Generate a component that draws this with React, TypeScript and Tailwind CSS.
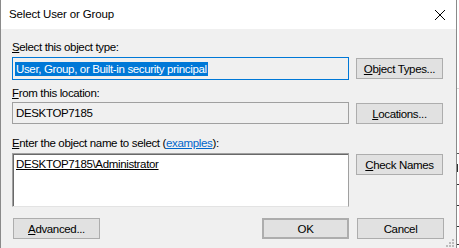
import React from 'react';

const font = { fontFamily: '"Liberation Sans", Arial, sans-serif' };

function Btn({ children, className = '' }: { children: React.ReactNode; className?: string }) {
  return (
    <div
      className={`flex h-[21px] w-[87px] shrink-0 items-center justify-center border border-[#adadad] bg-[#e1e1e1] text-black ${className}`}
    >
      {children}
    </div>
  );
}

export default function App() {
  return (
    <div
      className="flex h-[248px] w-[459px] overflow-hidden bg-white text-[11.5px] leading-[16px] tracking-[-0.35px] text-black"
      style={font}
    >
      {/* dialog window */}
      <div className="relative flex h-full w-[457px] shrink-0 flex-col border-x border-[#8a8a8a] bg-[#f0f0f0]">
        <div className="flex h-[29px] shrink-0 items-center justify-between bg-white pl-[8px] pr-[8px]">
          <span className="mt-[-1px] tracking-[-0.15px]">Select User or Group</span>
          <svg width="12" height="12" viewBox="0 0 12 12" className="mr-[2px]">
            <path d="M1 1L11 11M11 1L1 11" stroke="#000" strokeWidth="1" fill="none" />
          </svg>
        </div>

        <div className="flex flex-col pl-[11px] pr-[12px] pt-[10px]">
          <div className="h-[16px]">
            <span className="underline">S</span>elect this object type:
          </div>
          <div className="mt-[2px] flex items-start gap-[7px]">
            <div className="flex h-[23px] w-[337px] items-center border border-[#0078d7] bg-[#f0f0f0] pl-[2px]">
              <span className="bg-[#0078d7] px-[1px] leading-[14px] text-white">User, Group, or Built-in security principal</span>
            </div>
            <Btn className="mt-[1px]">
              <span><span className="underline">O</span>bject Types...</span>
            </Btn>
          </div>

          <div className="mt-[5px] h-[16px]">
            <span className="underline">F</span>rom this location:
          </div>
          <div className="mt-[1px] flex items-start gap-[7px]">
            <div className="flex h-[22px] w-[337px] items-center border border-[#a0a0a0] bg-[#f0f0f0] pl-[3px]">
              DESKTOP7185
            </div>
            <Btn className="mt-[1px]">
              <span><span className="underline">L</span>ocations...</span>
            </Btn>
          </div>

          <div className="mt-[11px] h-[16px]">
            <span className="underline">E</span>nter the object name to select (
            <span className="text-[#0066cc] underline">examples</span>):
          </div>
          <div className="mt-[2px] flex items-start gap-[7px]">
            <div className="h-[54px] w-[337px] border border-[#a0a0a0] border-b-[#e3e3e3] bg-white pl-[3px] pt-[2px] shadow-[inset_1px_1px_0_#696969]">
              <span className="underline">DESKTOP7185\Administrator</span>
            </div>
            <Btn className="mt-[1px]">
              <span><span className="underline">C</span>heck Names</span>
            </Btn>
          </div>

          <div className="mt-[11px] flex items-center">
            <Btn className="ml-[1px]">
              <span><span className="underline">A</span>dvanced...</span>
            </Btn>
            <div className="flex-1" />
            <Btn className="w-[73px] border-2 border-[#0078d7]">OK</Btn>
            <Btn className="ml-[8px] w-[72px]">Cancel</Btn>
          </div>
        </div>

        {/* size grip */}
        <svg width="8" height="8" viewBox="0 0 8 8" className="absolute bottom-[1px] right-[2px]">
          <rect x="6" y="0" width="2" height="2" fill="#bcbcbc" />
          <rect x="3" y="3" width="2" height="2" fill="#bcbcbc" />
          <rect x="6" y="3" width="2" height="2" fill="#bcbcbc" />
          <rect x="0" y="6" width="2" height="2" fill="#bcbcbc" />
          <rect x="3" y="6" width="2" height="2" fill="#bcbcbc" />
          <rect x="6" y="6" width="2" height="2" fill="#bcbcbc" />
        </svg>
      </div>

      {/* window behind */}
      <div className="flex flex-1 flex-col bg-white">
        <div className="mt-[88px] h-px bg-[#d9d9d9]" />
        <div className="mt-[64px] h-px bg-[#555]" />
        <div className="mt-[10px] h-[8px] w-px bg-[#333]" />
        <div className="mt-[12px] h-px bg-[#333]" />
        <div className="mt-[20px] h-px bg-[#333]" />
        <div className="mt-[20px] h-px bg-[#333]" />
        <div className="mt-[17px] h-px bg-[#333]" />
      </div>
    </div>
  );
}
